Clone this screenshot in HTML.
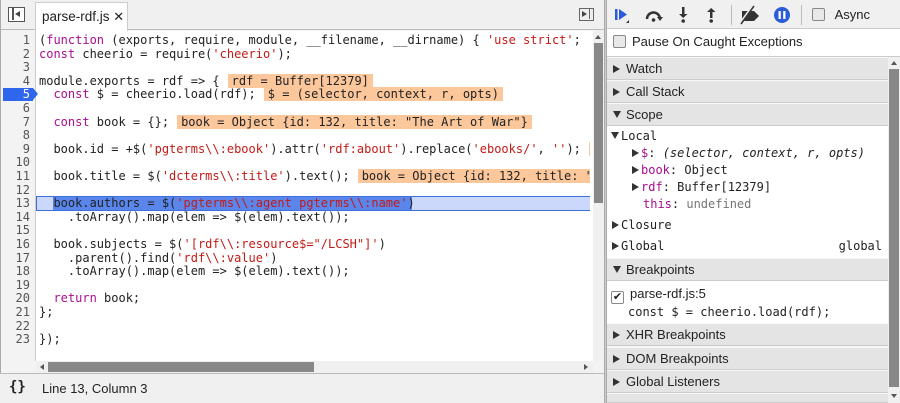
<!DOCTYPE html>
<html style="overflow:hidden;height:403px"><head><meta charset="utf-8"><style>
*{box-sizing:border-box;margin:0;padding:0}
html,body{overflow:hidden}
body{width:900px;height:403px;overflow:hidden;background:#f3f3f3;font-family:"Liberation Sans","DejaVu Sans",sans-serif;font-size:13px;color:#222;position:relative}
.abs{position:absolute}
.mono{font-family:"DejaVu Sans Mono","Liberation Mono",monospace;font-size:12px}
.k{color:#aa0d91}.s{color:#c41a16}
.ln{position:absolute;left:0;width:30px;text-align:right;color:#555;height:13.6px;line-height:13.6px}
.cd{position:absolute;left:39px;white-space:pre;height:13.6px;line-height:13.6px;color:#222}
.iv{background:#fdc79c;padding:0 4px;margin-left:8px}
.hdr{position:absolute;left:607px;width:281px;height:23px;background:#e4e4e4;border-bottom:1px solid #ccc;border-top:1px solid #f8f8f8;line-height:22px;padding-left:6px;font-size:13px}
.tri{display:inline-block;width:0;height:0;border-left:7px solid #333;border-top:4px solid transparent;border-bottom:4px solid transparent;margin-right:6px;vertical-align:0}
.trd{display:inline-block;width:0;height:0;border-top:7px solid #333;border-left:4px solid transparent;border-right:4px solid transparent;margin-right:5px;vertical-align:1px}
.cb{display:inline-block;width:13px;height:13px;border:1px solid #888;border-radius:2px;background:#e8e8e8;vertical-align:-2px}
.sc{position:absolute;left:607px;width:281px;white-space:pre;height:17px;line-height:17px}
</style></head><body>
<div class="abs" style="left:0;top:0;width:605px;height:30px;background:#f0f0f0;border-bottom:1px solid #bbb"></div>
<div class="abs" style="left:8px;top:7px;width:17px;height:15px;border:1.5px solid #555;background:#fff"><div class="abs" style="left:3px;top:0;width:1.5px;height:12px;background:#555"></div><div class="abs" style="left:6px;top:3px;border-right:5px solid #444;border-top:3.5px solid transparent;border-bottom:3.5px solid transparent"></div></div>
<div class="abs" style="left:35px;top:2px;width:93px;height:29px;background:#fff;border:1px solid #ccc;border-bottom:none;line-height:27px;padding-left:6px;font-size:13.5px">parse-rdf.js <span style="font-size:13px">✕</span></div>
<div class="abs" style="left:579px;top:8px;width:15px;height:13px;border:1.5px solid #666;background:#eee"><div class="abs" style="right:3px;top:0;width:1.5px;height:10px;background:#666"></div><div class="abs" style="left:2px;top:2px;border-left:5px solid #444;border-top:3.5px solid transparent;border-bottom:3.5px solid transparent"></div></div>
<div class="abs" style="left:0;top:31px;width:36px;height:330px;background:#f3f3f3;border-right:1px solid #ccc"></div>
<div class="abs" style="left:36px;top:31px;width:557px;height:330px;background:#fff"></div>
<div class="abs" style="left:0;top:0;width:1px;height:403px;background:#aaa"></div>
<div class="abs" style="left:3px;top:88px;width:30px;height:13px;background:#2f66ee"></div>
<div class="abs" style="left:33px;top:88px;border-left:5px solid #2f66ee;border-top:6.5px solid transparent;border-bottom:6.5px solid transparent"></div>
<div class="abs" style="left:36px;top:196px;width:557px;height:15px;background:#cbd8fb;border:1px solid #3f6ee0"></div>
<div class="abs" style="left:53px;top:197px;width:359px;height:13px;background:#5a86ec"></div>
<div class="mono">
<div class="ln" style="top:34px">1</div><div class="cd" style="top:34px">(<span class="k">function</span> (exports, require, module, __filename, __dirname) { <span class="s">'use strict'</span>;</div>
<div class="ln" style="top:47.6px">2</div><div class="cd" style="top:47.6px"><span class="k">const</span> cheerio = require(<span class="s">'cheerio'</span>);</div>
<div class="ln" style="top:61.2px">3</div>
<div class="ln" style="top:74.8px">4</div><div class="cd" style="top:74.8px">module.exports = rdf =&gt; {<span class="iv">rdf = Buffer[12379]</span></div>
<div class="ln" style="top:88.4px;color:#fff;z-index:2">5</div><div class="cd" style="top:88.4px">  <span class="k">const</span> $ = cheerio.load(rdf);<span class="iv">$ = (selector, context, r, opts)</span></div>
<div class="ln" style="top:102px">6</div>
<div class="ln" style="top:115.6px">7</div><div class="cd" style="top:115.6px">  <span class="k">const</span> book = {};<span class="iv">book = Object {id: 132, title: "The Art of War"}</span></div>
<div class="ln" style="top:129.2px">8</div>
<div class="ln" style="top:142.8px">9</div><div class="cd" style="top:142.8px">  book.id = +$(<span class="s">'pgterms\\:ebook'</span>).attr(<span class="s">'rdf:about'</span>).replace(<span class="s">'ebooks/'</span>, <span class="s">''</span>);<span class="iv">  </span></div>
<div class="ln" style="top:156.4px">10</div>
<div class="ln" style="top:170px">11</div><div class="cd" style="top:170px">  book.title = $(<span class="s">'dcterms\\:title'</span>).text();<span class="iv">book = Object {id: 132, title: "</span></div>
<div class="ln" style="top:183.6px">12</div>
<div class="ln" style="top:197.2px">13</div><div class="cd" style="top:197.2px">  book.authors = $(<span class="s">'pgterms\\:agent pgterms\\:name'</span>)</div>
<div class="ln" style="top:210.8px">14</div><div class="cd" style="top:210.8px">    .toArray().map(elem =&gt; $(elem).text());</div>
<div class="ln" style="top:224.4px">15</div>
<div class="ln" style="top:238px">16</div><div class="cd" style="top:238px">  book.subjects = $(<span class="s">'[rdf\\:resource$="/LCSH"]'</span>)</div>
<div class="ln" style="top:251.6px">17</div><div class="cd" style="top:251.6px">    .parent().find(<span class="s">'rdf\\:value'</span>)</div>
<div class="ln" style="top:265.2px">18</div><div class="cd" style="top:265.2px">    .toArray().map(elem =&gt; $(elem).text());</div>
<div class="ln" style="top:278.8px">19</div>
<div class="ln" style="top:292.4px">20</div><div class="cd" style="top:292.4px">  <span class="k">return</span> book;</div>
<div class="ln" style="top:306px">21</div><div class="cd" style="top:306px">};</div>
<div class="ln" style="top:319.6px">22</div>
<div class="ln" style="top:333.2px">23</div><div class="cd" style="top:333.2px">});</div>
</div>
<div class="abs" style="left:590px;top:34px;width:15px;height:327px;background:#fff"></div>
<div class="abs" style="left:593px;top:31px;width:11px;height:330px;background:#f0f0f0"></div>
<div class="abs" style="left:595px;top:35px;border-bottom:4px solid #555;border-left:3px solid transparent;border-right:3px solid transparent"></div>
<div class="abs" style="left:594px;top:43px;width:9px;height:160px;background:#888"></div>
<div class="abs" style="left:36px;top:361px;width:557px;height:12px;background:#f0f0f0"></div>
<div class="abs" style="left:40px;top:364px;border-right:4px solid #555;border-top:3px solid transparent;border-bottom:3px solid transparent"></div>
<div class="abs" style="left:48px;top:362px;width:266px;height:10px;background:#888"></div>
<div class="abs" style="left:584px;top:364px;border-left:4px solid #555;border-top:3px solid transparent;border-bottom:3px solid transparent"></div>
<div class="abs" style="left:0;top:373px;width:605px;height:30px;background:#f0f0f0;border-top:1px solid #bbb"></div>
<div class="abs" style="left:9px;top:379px;font-weight:bold;font-size:14px;font-family:'DejaVu Sans Mono',monospace">{}</div>
<div class="abs" style="left:42px;top:381px;font-size:13px">Line 13, Column 3</div>
<div class="abs" style="left:604px;top:0;width:3px;height:403px;background:#ccc;border-left:1px solid #aaa;border-right:1px solid #aaa"></div>
<div class="abs" style="left:607px;top:0;width:293px;height:29px;background:#f0f0f0;border-bottom:1px solid #ccc"></div>
<svg class="abs" style="left:612px;top:5px" width="280" height="20">
<rect x="3" y="4" width="2.5" height="11" fill="#2a5bdb"/><path d="M7 4 L15 9.5 L7 15Z" fill="#2a5bdb"/><path d="M14 18 L17 15 L17 18Z" fill="#333"/>
<path d="M35 14 A6.5 6.5 0 0 1 48 14" fill="none" stroke="#333" stroke-width="2.5"/><path d="M45 12 L51 12 L48 16Z" fill="#333"/><circle cx="41.5" cy="15" r="1.8" fill="#333"/>
<rect x="70" y="2" width="2.5" height="8" fill="#333"/><path d="M67 9 L75.5 9 L71.2 13Z" fill="#333"/><circle cx="71.2" cy="16" r="1.8" fill="#333"/>
<path d="M95 7 L103.5 7 L99.2 3Z" fill="#333"/><rect x="98" y="7" width="2.5" height="6" fill="#333"/><circle cx="99.2" cy="16" r="1.8" fill="#333"/>
<rect x="119" y="0" width="1" height="20" fill="#bbb"/>
<path d="M130 6 L142 6 L147 11 L142 16 L130 16Z" fill="#333"/><path d="M128 19 L141 1" stroke="#f0f0f0" stroke-width="3"/><path d="M129 19 L142 1" stroke="#333" stroke-width="1.5"/>
<circle cx="170" cy="10" r="8" fill="#2a5bdb"/><rect x="166.5" y="6" width="2.3" height="8" fill="#fff"/><rect x="171.2" y="6" width="2.3" height="8" fill="#fff"/>
<rect x="189" y="0" width="1" height="20" fill="#bbb"/>
</svg>
<div class="abs" style="left:812px;top:7px"><span class="cb"></span> <span style="margin-left:6px">Async</span></div>
<div class="abs" style="left:607px;top:29px;width:293px;height:28px;background:#fff;border-bottom:1px solid #ccc;padding:5px 0 0 6px"><span class="cb"></span><span style="margin-left:6px">Pause On Caught Exceptions</span></div>
<div class="hdr" style="top:57px"><span class="tri"></span>Watch</div>
<div class="hdr" style="top:80px"><span class="tri"></span>Call Stack</div>
<div class="hdr" style="top:103px"><span class="trd"></span>Scope</div>
<div class="abs" style="left:607px;top:126px;width:281px;height:132px;background:#fff"></div>
<div class="mono">
<div class="sc" style="top:128px;padding-left:4px"><span class="trd" style="margin-right:2px"></span>Local</div>
<div class="sc" style="top:145px;padding-left:25px"><span class="tri" style="margin-right:2px"></span><span class="k">$</span>: <i>(selector, context, r, opts)</i></div>
<div class="sc" style="top:162px;padding-left:25px"><span class="tri" style="margin-right:2px"></span><span class="k">book</span>: Object</div>
<div class="sc" style="top:179px;padding-left:25px"><span class="tri" style="margin-right:2px"></span><span class="k">rdf</span>: Buffer[12379]</div>
<div class="sc" style="top:196px;padding-left:36px"><span class="k">this</span>: <span style="color:#777">undefined</span></div>
<div class="sc" style="top:217px;padding-left:5px"><span class="tri" style="margin-right:2px"></span>Closure</div>
<div class="sc" style="top:238px;padding-left:5px"><span class="tri" style="margin-right:2px"></span>Global<span style="position:absolute;right:6px">global</span></div>
</div>
<div class="hdr" style="top:258px"><span class="trd"></span>Breakpoints</div>
<div class="abs" style="left:607px;top:281px;width:281px;height:42px;background:#fff"></div>
<div class="abs" style="left:611px;top:286px"><span class="cb" style="background:#fff;text-align:center;line-height:10px;font-size:11px">✔</span><span style="margin-left:6px">parse-rdf.js:5</span></div>
<div class="abs mono" style="left:628px;top:305px;white-space:pre">const $ = cheerio.load(rdf);</div>
<div class="hdr" style="top:323px"><span class="tri"></span>XHR Breakpoints</div>
<div class="hdr" style="top:347px"><span class="tri"></span>DOM Breakpoints</div>
<div class="hdr" style="top:370px"><span class="tri"></span>Global Listeners</div>
<div class="hdr" style="top:393px;height:10px"></div>
<div class="abs" style="left:888px;top:57px;width:12px;height:346px;background:#f0f0f0"></div>
<div class="abs" style="left:891px;top:61px;border-bottom:4px solid #555;border-left:3px solid transparent;border-right:3px solid transparent"></div>
<div class="abs" style="left:889px;top:69px;width:10px;height:318px;background:#888"></div>
<div class="abs" style="left:891px;top:394px;border-top:4px solid #555;border-left:3px solid transparent;border-right:3px solid transparent"></div>
</body></html>
